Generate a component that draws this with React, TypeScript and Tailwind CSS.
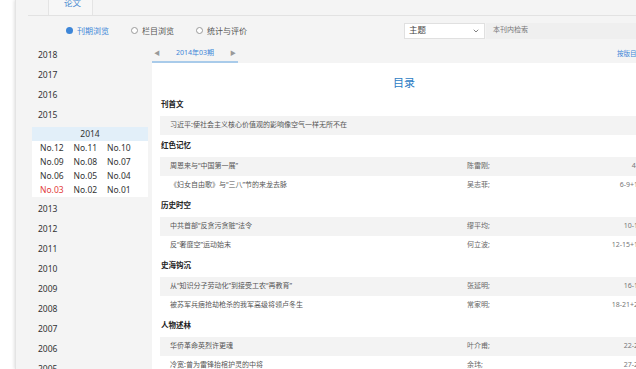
import { ChevronDown } from 'lucide-react';

const years = ['2018', '2017', '2016', '2015'];
const laterYears = ['2013', '2012', '2011', '2010', '2009', '2008', '2007', '2006', '2005'];
const issues = [
  ['No.12', 'No.11', 'No.10'],
  ['No.09', 'No.08', 'No.07'],
  ['No.06', 'No.05', 'No.04'],
  ['No.03', 'No.02', 'No.01'],
];

const sections = [
  { title: '刊首文', items: [['习近平:使社会主义核心价值观的影响像空气一样无所不在', '', '']] },
  {
    title: '红色记忆',
    items: [
      ['周恩来与“中国第一展”', '陈雷刚;', '4-5'],
      ['《妇女自由歌》与“三八”节的来龙去脉', '吴志菲;', '6-9+14'],
    ],
  },
  {
    title: '历史时空',
    items: [
      ['中共首部“反贪污贪赃”法令', '缪平均;', '10-11'],
      ['反“奢靡空”运动始末', '何立波;', '12-15+17'],
    ],
  },
  {
    title: '史海钩沉',
    items: [
      ['从“知识分子劳动化”到接受工农“再教育”', '张延明;', '16-17'],
      ['被苏军兵痞抢劫枪杀的我军高级将领卢冬生', '常家明;', '18-21+27'],
    ],
  },
  {
    title: '人物述林',
    items: [
      ['华侨革命英烈许更魂', '叶介甫;', '22-26'],
      ['冷宽:曾为雷锋抬棺护灵的中将', '余玮;', '27-29'],
    ],
  },
];

function Radio({ label, checked }: { label: string; checked?: boolean }) {
  return (
    <div className="w-[65px] flex items-center gap-[4px]">
      {checked ? (
        <span className="w-[7px] h-[7px] rounded-full bg-[#3d86d8]" />
      ) : (
        <span className="w-[7px] h-[7px] rounded-full border border-[#9a9a9a] bg-white" />
      )}
      <span className={checked ? 'text-[8px] text-[#3d86d8]' : 'text-[8px] text-[#555]'}>{label}</span>
    </div>
  );
}

export default function App() {
  return (
    <div className="w-[636px] h-[369px] overflow-hidden bg-white flex font-['Noto_Sans','Noto_Sans_CJK_SC',sans-serif]">
      <div className="w-[15px] shrink-0 bg-white" />
      <div className="w-[700px] shrink-0 bg-[#f4f4f4] border-l border-[#e4e4e4] shadow-[-1px_0_3px_rgba(0,0,0,0.12)]">
        {/* top tab */}
        <div className="h-[16px] ml-[12px] border-b border-[#e2e2e2] flex">
          <div className="ml-[20px] w-[45px] h-[15px] border-x border-[#e4e4e4] bg-[#f7f7f7] overflow-hidden">
            <div className="-mt-[2px] pl-[15px] text-[8.5px] leading-[10px] text-[#4a8ad0]">论文</div>
          </div>
        </div>

        {/* radios + search */}
        <div className="h-[29px] flex items-center pl-[50px]">
          <div className="w-[338px] flex">
            <Radio label="刊期浏览" checked />
            <Radio label="栏目浏览" />
            <Radio label="统计与评价" />
          </div>
          <div className="w-[81px] h-[16px] bg-white border border-[#e0e0e0] flex items-center justify-between px-[4px]">
            <span className="text-[8.5px] text-[#444]">主题</span>
            <ChevronDown size={8} strokeWidth={2.2} className="text-[#555]" />
          </div>
          <div className="ml-[1px] w-[220px] h-[16px] bg-[#efefef] flex items-center pl-[7px]">
            <span className="text-[7px] text-[#777]">本刊内检索</span>
          </div>
        </div>

        <div className="flex">
          {/* sidebar */}
          <div className="w-[136px] shrink-0 pl-[16px] pr-[4px]">
            {years.map((y) => (
              <div key={y} className="h-[20px] flex items-center pl-[6px] text-[8.5px] text-[#333]">
                {y}
              </div>
            ))}
            <div className="my-[2px] bg-white">
              <div className="h-[14px] bg-[#e2eff9] flex items-center justify-center text-[8.5px] text-[#333]">2014</div>
              {issues.map((row, i) => (
                <div key={i} className="h-[14px] flex items-center pl-[8px]">
                  {row.map((n) => (
                    <span
                      key={n}
                      className={
                        n === 'No.03'
                          ? 'w-[33.5px] text-[8.5px] text-[#e23b3b]'
                          : 'w-[33.5px] text-[8.5px] text-[#333]'
                      }
                    >
                      {n}
                    </span>
                  ))}
                </div>
              ))}
            </div>
            {laterYears.map((y) => (
              <div key={y} className="h-[20px] flex items-center pl-[6px] text-[8.5px] text-[#333]">
                {y}
              </div>
            ))}
          </div>

          {/* main */}
          <div className="w-[504px] shrink-0">
            <div className="h-[18px] flex items-end justify-between">
              <div className="w-[86px] h-[18px] flex items-center justify-between px-[2px] border-b-2 border-[#a9cbea]">
                <span className="text-[6px] text-[#999]">◀</span>
                <span className="text-[7px] text-[#3d86d8]">2014年03期</span>
                <span className="text-[6px] text-[#999]">▶</span>
              </div>
              <div className="h-[18px] flex items-center pr-[13px] text-[6.5px] text-[#3d86d8]">按版目录</div>
            </div>
            <div className="bg-white px-[8px] pt-[12px] h-[320px]">
              <div className="h-[16px] pb-[3px] box-content flex items-center justify-center text-[11px] text-[#2d7cc4]">
                目录
              </div>
              {sections.map((s) => (
                <div key={s.title}>
                  <div className="h-[22px] flex items-center pl-[1px] text-[7.5px] font-bold text-[#222]">{s.title}</div>
                  {s.items.map((it, i) => (
                    <div
                      key={it[0]}
                      className={
                        i % 2 === 0
                          ? 'h-[19px] flex items-center bg-[#f3f3f3] pl-[10px] pr-[6px]'
                          : 'h-[19px] flex items-center bg-white pl-[10px] pr-[6px]'
                      }
                    >
                      <span className="flex-1 min-w-0 text-[7px] text-[#555]">{it[0]}</span>
                      <span className="w-[110px] text-[7px] text-[#666]">{it[1]}</span>
                      <span className="w-[65px] text-right text-[7px] text-[#777]">{it[2]}</span>
                    </div>
                  ))}
                </div>
              ))}
            </div>
          </div>
        </div>
      </div>
    </div>
  );
}
